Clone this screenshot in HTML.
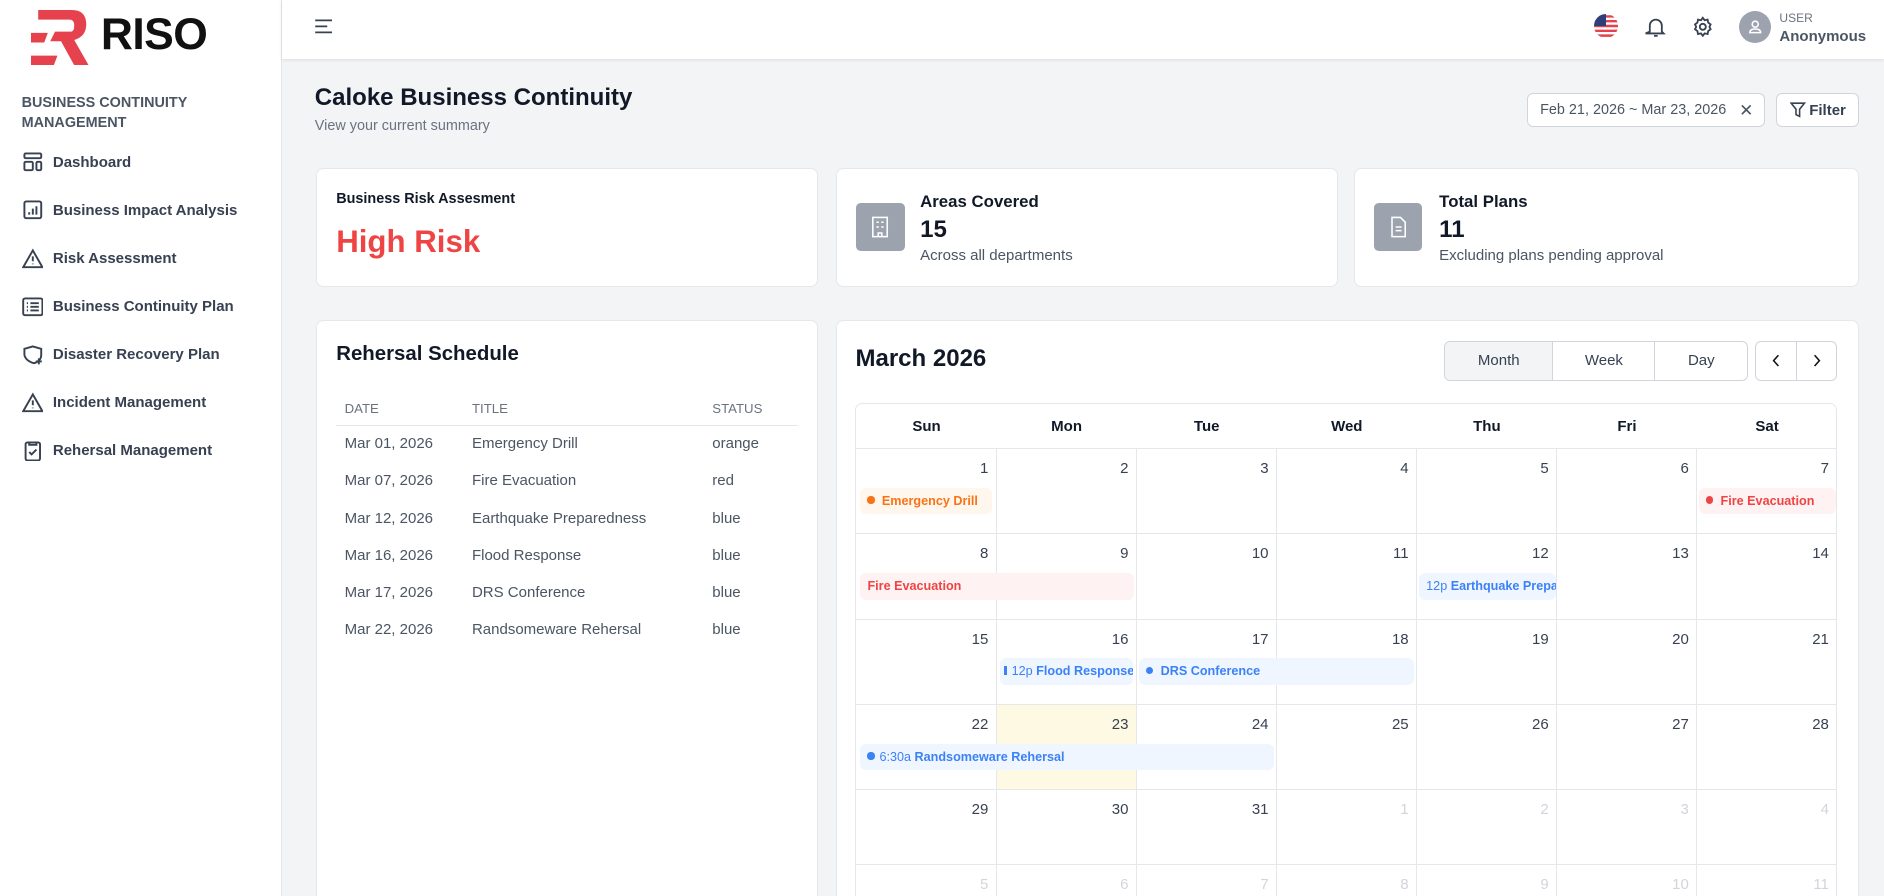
<!DOCTYPE html>
<html><head><meta charset="utf-8"><style>
*{box-sizing:border-box;margin:0;padding:0}
html,body{width:1884px;height:896px;overflow:hidden}
body{background:#f3f4f6;font-family:"Liberation Sans",Arial,sans-serif;color:#111827}
#r{zoom:1.2015;width:1568px;height:746px;position:relative;overflow:hidden}
.abs{position:absolute}
.side{left:0;top:0;width:235px;height:746px;background:#fff;border-right:1px solid #e5e7eb}
.nav{position:absolute;left:18px;display:flex;align-items:center;font-size:12.5px;color:#374151;font-weight:bold}
.nav svg{width:18px;height:18px;margin-right:8px;stroke:#374151;fill:none;stroke-width:1.6}
.hdr{left:235px;top:0;width:1333px;height:49px;background:#fff;box-shadow:0 1px 3px rgba(0,0,0,.1)}
.card{position:absolute;background:#fff;border:1px solid #e5e7eb;border-radius:6px}
.ic{position:absolute;width:40px;height:40px;background:#9ca3af;border-radius:4px;left:16px;top:28px}
table{border-collapse:collapse;font-size:12.5px;color:#4b5563}
.cal{position:absolute;left:712px;top:335px;width:817px;border:1px solid #e5e7eb;border-radius:6px;overflow:hidden}
.cell{position:absolute;border-right:1px solid #e5e7eb;border-bottom:1px solid #e5e7eb;font-size:12.5px;color:#374151;text-align:right;padding:9px 6px 0 0}
.ev{position:absolute;height:22px;border-radius:5px;font-size:10.5px;font-weight:bold;line-height:22px;padding-left:6px;white-space:nowrap;overflow:hidden}
.dot{display:inline-block;width:6px;height:6px;border-radius:50%;margin-right:6px;vertical-align:1px}
</style></head><body><div id="r">
<div class="abs side">
 <svg class="abs" style="left:26px;top:8px" width="50" height="46" viewBox="0 0 50 46"><path d="M6 0H34Q46 0 46 12Q46 22 36 25L48 46H36L25 26H16L20 18H33Q36 18 36 13Q36 8 32 8H6Z" fill="#e5424d"/><path d="M0 19H14L11 27H0ZM0 38H22L19 46H0Z" fill="#e5424d"/></svg>
 <div class="abs" style="left:84px;top:8px;font-size:37px;font-weight:bold;color:#111;letter-spacing:-0.5px">RISO</div>
 <div class="abs" style="left:18px;top:77px;font-size:12px;font-weight:bold;color:#4b5563;line-height:17px">BUSINESS CONTINUITY<br>MANAGEMENT</div>
 <div class="nav" style="top:126px"><svg viewBox="0 0 18 18"><rect x="2" y="2" width="14" height="4" rx="1"/><rect x="2" y="9" width="7" height="7" rx="1"/><rect x="12" y="9" width="4" height="7" rx="1"/></svg>Dashboard</div>
 <div class="nav" style="top:166px"><svg viewBox="0 0 18 18"><rect x="2" y="2" width="14" height="14" rx="1.5"/><path d="M6 13v-2M9 13V8M12 13V6"/></svg>Business Impact Analysis</div>
 <div class="nav" style="top:206px"><svg viewBox="0 0 18 18"><path d="M9 2L17 16H1Z"/><path d="M9 7v4M9 13v.5"/></svg>Risk Assessment</div>
 <div class="nav" style="top:246px"><svg viewBox="0 0 18 18"><rect x="1" y="2" width="16" height="14" rx="1.5"/><path d="M4 6h1M7 6h7M4 9h1M7 9h7M4 12h1M7 12h7"/></svg>Business Continuity Plan</div>
 <div class="nav" style="top:286px"><svg viewBox="0 0 18 18"><path d="M9 2L16 4V9Q16 14 10 16Q3 14 2 9V4Z"/><path d="M14 12v5M11.5 14.5h5"/></svg>Disaster Recovery Plan</div>
 <div class="nav" style="top:326px"><svg viewBox="0 0 18 18"><path d="M9 2L17 16H1Z"/><path d="M9 7v4M9 13v.5"/></svg>Incident Management</div>
 <div class="nav" style="top:366px"><svg viewBox="0 0 18 18"><rect x="3" y="2" width="12" height="15" rx="1.5"/><path d="M6 2v2h6V2M6 10l2 2 4-4"/></svg>Rehersal Management</div>
</div>
<div class="abs hdr">
 <svg class="abs" style="left:26px;top:15px" width="16" height="14" viewBox="0 0 16 14" stroke="#374151" stroke-width="1.5"><path d="M1 2h14M1 7h10M1 12h14"/></svg>
 <svg class="abs" style="left:1092px;top:12px" width="20" height="20" viewBox="0 0 20 20"><defs><clipPath id="c"><circle cx="10" cy="10" r="10"/></clipPath></defs><g clip-path="url(#c)"><rect width="20" height="20" fill="#fff"/><path d="M0 1h20v2H0zM0 5h20v2H0zM0 9h20v2H0zM0 13h20v2H0zM0 17h20v2H0z" fill="#e5424d"/><rect width="10" height="10" fill="#2d3e7a"/></g></svg>
 <svg class="abs" style="left:1134px;top:13px" width="18" height="18" viewBox="0 0 18 18" fill="none" stroke="#374151" stroke-width="1.5"><path d="M4 13V8a5 5 0 0110 0v5l1.5 1.5h-15Z"/><path d="M7.5 16.5h3"/></svg>
 <svg class="abs" style="left:1173px;top:13px" width="18" height="18" viewBox="0 0 18 18" fill="none" stroke="#374151" stroke-width="1.5"><circle cx="9" cy="9" r="2.5"/><path d="M9 1.5l1.5 2 2.5-.5.5 2.5 2 1.5-1 2 1 2-2 1.5-.5 2.5-2.5-.5L9 16.5l-1.5-2-2.5.5-.5-2.5-2-1.5 1-2-1-2 2-1.5.5-2.5 2.5.5Z"/></svg>
 <div class="abs" style="left:1212px;top:9px;width:27px;height:27px;border-radius:50%;background:#9ca3af"><svg width="27" height="27" viewBox="0 0 27 27" fill="none" stroke="#fff" stroke-width="1.3"><circle cx="13.5" cy="11" r="2.5"/><path d="M9 18q0-3 4.5-3t4.5 3Z"/></svg></div>
 <div class="abs" style="left:1246px;top:9px;font-size:10px;color:#6b7280">USER</div>
 <div class="abs" style="left:1246px;top:23px;font-size:12.5px;font-weight:bold;color:#4b5563">Anonymous</div>
</div>
<div class="abs" style="left:262px;top:70px;font-size:20px;font-weight:bold">Caloke Business Continuity</div>
<div class="abs" style="left:262px;top:98px;font-size:12px;color:#6b7280">View your current summary</div>
<div class="abs" style="left:1271px;top:77px;width:198px;height:29px;background:#fff;border:1px solid #d1d5db;border-radius:5px;font-size:12px;color:#4b5563;padding:7px 0 0 10px;white-space:nowrap">Feb 21, 2026 ~ Mar 23, 2026<span style="position:absolute;right:9px;top:5px;font-size:14px">✕</span></div>
<div class="abs" style="left:1478px;top:77px;width:69px;height:29px;background:#fff;border:1px solid #d1d5db;border-radius:5px;font-size:12.5px;font-weight:bold;color:#374151;padding:7px 0 0 11px;white-space:nowrap"><svg width="13" height="13" viewBox="0 0 13 13" fill="none" stroke="#374151" stroke-width="1.3" style="vertical-align:-2px;margin-right:3px"><path d="M1 1h11L8 6v6L5 10.5V6Z"/></svg>Filter</div>

<div class="card" style="left:263px;top:140px;width:418px;height:99px">
 <div class="abs" style="left:16px;top:18px;font-size:12px;font-weight:bold">Business Risk Assesment</div>
 <div class="abs" style="left:16px;top:46px;font-size:26px;font-weight:bold;color:#ef4444">High Risk</div>
</div>
<div class="card" style="left:696px;top:140px;width:418px;height:99px">
 <div class="ic"><svg width="40" height="40" viewBox="0 0 40 40" fill="none" stroke="#fff" stroke-width="1.3"><rect x="14" y="12" width="12" height="16"/><path d="M17 16h2M21 16h2M17 20h2M21 20h2M18.5 28v-3h3v3"/></svg></div>
 <div class="abs" style="left:69px;top:19px;font-size:14px;font-weight:bold">Areas Covered</div>
 <div class="abs" style="left:69px;top:39px;font-size:20px;font-weight:bold">15</div>
 <div class="abs" style="left:69px;top:65px;font-size:12.5px;color:#4b5563">Across all departments</div>
</div>
<div class="card" style="left:1127px;top:140px;width:420px;height:99px">
 <div class="ic"><svg width="40" height="40" viewBox="0 0 40 40" fill="none" stroke="#fff" stroke-width="1.3"><path d="M15 12h7l4 4v12H15Z"/><path d="M18 20h5M18 23h5"/></svg></div>
 <div class="abs" style="left:70px;top:19px;font-size:14px;font-weight:bold">Total Plans</div>
 <div class="abs" style="left:70px;top:39px;font-size:20px;font-weight:bold">11</div>
 <div class="abs" style="left:70px;top:65px;font-size:12.5px;color:#4b5563">Excluding plans pending approval</div>
</div>

<div class="card" style="left:263px;top:266px;width:418px;height:500px">
 <div class="abs" style="left:16px;top:19px;font-size:17px;font-weight:bold">Rehersal Schedule</div>
 <table class="abs" style="left:16px;top:59px;width:384px">
  <tr style="font-size:11px;color:#6b7280;border-bottom:1px solid #e5e7eb;height:28px"><td style="padding-left:7px;width:113px">DATE</td><td style="width:200px">TITLE</td><td>STATUS</td></tr>
  <tr style="height:31px"><td style="padding-left:7px">Mar 01, 2026</td><td>Emergency Drill</td><td>orange</td></tr>
  <tr style="height:31px"><td style="padding-left:7px">Mar 07, 2026</td><td>Fire Evacuation</td><td>red</td></tr>
  <tr style="height:31px"><td style="padding-left:7px">Mar 12, 2026</td><td>Earthquake Preparedness</td><td>blue</td></tr>
  <tr style="height:31px"><td style="padding-left:7px">Mar 16, 2026</td><td>Flood Response</td><td>blue</td></tr>
  <tr style="height:31px"><td style="padding-left:7px">Mar 17, 2026</td><td>DRS Conference</td><td>blue</td></tr>
  <tr style="height:31px"><td style="padding-left:7px">Mar 22, 2026</td><td>Randsomeware Rehersal</td><td>blue</td></tr>
 </table>
</div>

<div class="card" style="left:696px;top:266px;width:851px;height:500px"></div>
<div class="abs" style="left:712px;top:287px;font-size:20px;font-weight:bold">March 2026</div>
<div class="abs" style="left:1202px;top:284px;width:253px;height:33px;border:1px solid #d1d5db;border-radius:5px;background:#fff;display:flex;font-size:12.5px;color:#374151;overflow:hidden">
 <div style="width:90px;background:#f3f4f6;border-right:1px solid #d1d5db;text-align:center;line-height:31px">Month</div>
 <div style="width:85px;border-right:1px solid #d1d5db;text-align:center;line-height:31px">Week</div>
 <div style="flex:1;text-align:center;line-height:31px">Day</div>
</div>
<div class="abs" style="left:1461px;top:284px;width:68px;height:33px;border:1px solid #d1d5db;border-radius:5px;background:#fff;display:flex">
 <div style="width:34px;border-right:1px solid #d1d5db;text-align:center"><svg width="10" height="31" viewBox="0 0 10 31" fill="none" stroke="#111" stroke-width="1.3"><path d="M7 11L3 15.5 7 20"/></svg></div>
 <div style="flex:1;text-align:center"><svg width="10" height="31" viewBox="0 0 10 31" fill="none" stroke="#111" stroke-width="1.3"><path d="M3 11L7 15.5 3 20"/></svg></div>
</div>
<div class="cal" style="height:420px;background:#fff" id="cal"></div>
<script>
var c=document.getElementById('cal'),w=116.6,h='';
['Sun','Mon','Tue','Wed','Thu','Fri','Sat'].forEach(function(d,i){h+='<div style="position:absolute;left:'+(i*w)+'px;top:0;width:'+w+'px;height:38px;line-height:38px;text-align:center;font-size:12.5px;font-weight:bold;border-bottom:1px solid #e5e7eb">'+d+'</div>'});
var tops=[38,109,180,251,322,384],hs=[71,71,71,71,62,60];
for(var r=0;r<6;r++)for(var i=0;i<7;i++){var n=r*7+i+1,col='#374151';if(n>31){n-=31;col='#d1d5db'}
var bg=(r==3&&i==1)?'background:#fef9e3;':'';
h+='<div class="cell" style="'+bg+'left:'+(i*w)+'px;top:'+tops[r]+'px;width:'+w+'px;height:'+hs[r]+'px;color:'+col+'">'+n+'</div>'}
c.innerHTML=h;
</script>
<div class="ev" style="left:716px;top:406px;width:110px;background:#fff7ed;color:#f97316"><span class="dot" style="background:#f97316"></span>Emergency Drill</div>
<div class="ev" style="left:1414px;top:406px;width:114px;background:#fef2f2;color:#ef4444"><span class="dot" style="background:#ef4444"></span>Fire Evacuation</div>
<div class="ev" style="left:716px;top:477px;width:228px;background:#fef2f2;color:#ef4444">Fire Evacuation</div>
<div class="ev" style="left:1181px;top:477px;width:114px;background:#eff6ff;color:#3b82f6"><span style="font-weight:normal">12p</span> Earthquake Preparedness</div>
<div class="ev" style="left:832px;top:548px;width:111px;background:#eff6ff;color:#3b82f6;padding-left:4px"><span style="display:inline-block;width:2px;height:8px;background:#3b82f6;margin-right:4px"></span><span style="font-weight:normal">12p</span> Flood Response</div>
<div class="ev" style="left:948px;top:548px;width:229px;background:#eff6ff;color:#3b82f6"><span class="dot" style="background:#3b82f6"></span>DRS Conference</div>
<div class="ev" style="left:716px;top:619px;width:344px;background:#eff6ff;color:#3b82f6"><span class="dot" style="background:#3b82f6;margin-right:4px"></span><span style="font-weight:normal">6:30a</span> Randsomeware Rehersal</div>
</div></body></html>
